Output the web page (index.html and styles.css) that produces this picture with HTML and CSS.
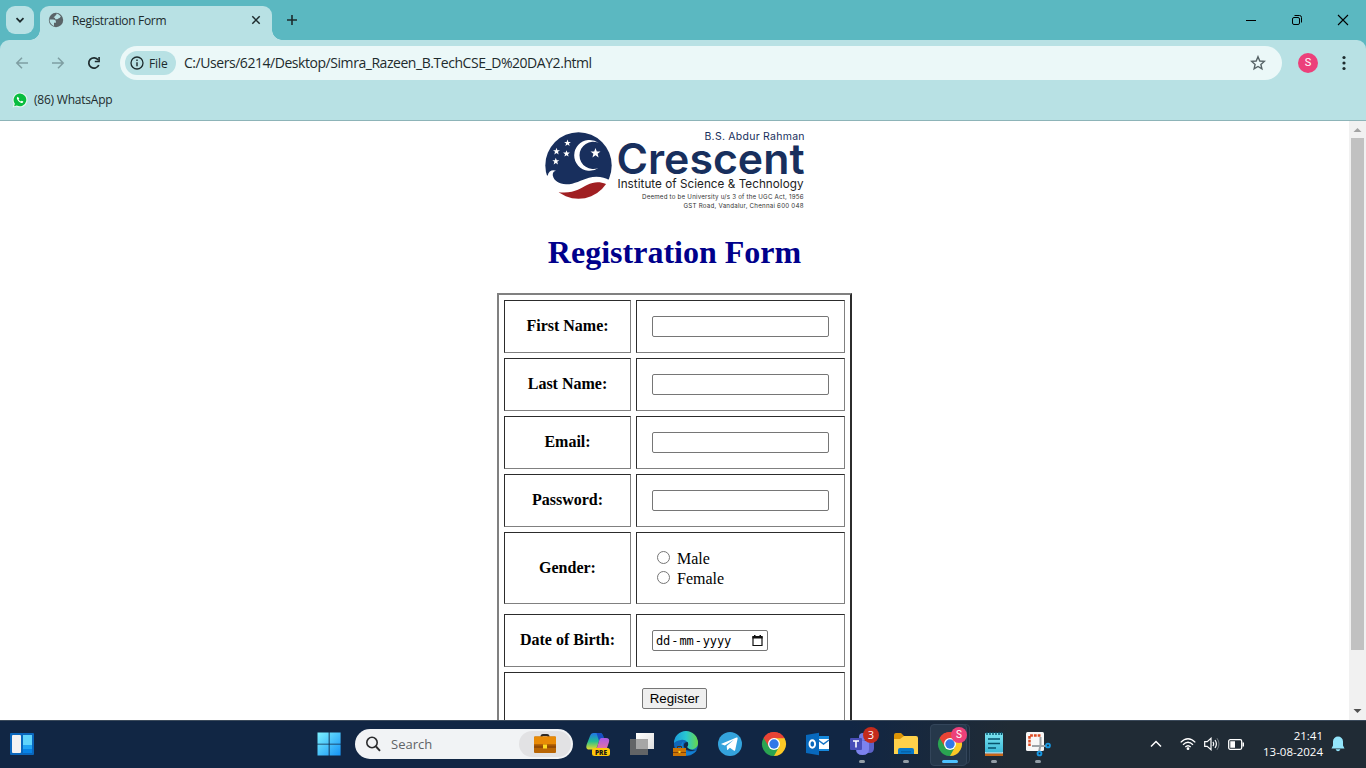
FILE: index.html
```html
<!DOCTYPE html>
<html lang="en">
<head>
<meta charset="utf-8">
<title>Registration Form</title>
<link rel="stylesheet" href="styles.css">
</head>
<body>
<div class="screen">
  <header class="tabstrip">
    <div class="tab-search"><svg width="10" height="10" viewBox="0 0 10 10"><path d="M1.500 3.200 5 6.700 8.500 3.200" fill="none" stroke="#1d2b2d" stroke-width="1.700"/></svg></div>
    <div class="tab">
      <svg class="globe" width="16" height="16" viewBox="0 0 16 16"><circle cx="8" cy="8" r="7.200" fill="#5a6468"/><path d="M8.600 1.500c1.700.4 3.500 1.700 4.300 3.300-.8 0-.8 1.500-2 1.500-.8 0-.8.9-1.700.9H7.100V5.800H5.500L7.200 3.800c.6-.6 1.300-.7 1.400-2.300zM1.500 7.600h3.800c1.600 0 2.600.8 2.600 2v1.100H6v3.400C3.400 13.200 1.600 10.800 1.500 7.600z" fill="#b8e1e4"/></svg>
      <span class="tab-title">Registration Form</span>
      <svg class="tab-close" width="10" height="10" viewBox="0 0 10 10"><path d="M1.300 1.300l7.400 7.400M8.700 1.300 1.300 8.700" stroke="#1d2b2d" stroke-width="1.500"/></svg>
    </div>
    <svg class="new-tab" width="12" height="12" viewBox="0 0 12 12"><path d="M6 1v10M1 6h10" stroke="#1d2b2d" stroke-width="1.600"/></svg>
    <div class="window-buttons">
      <svg width="12" height="12" viewBox="0 0 12 12"><path d="M1 6.500h10" stroke="#000"/></svg>
      <svg width="12" height="12" viewBox="0 0 12 12"><rect x="1.500" y="3.500" width="7" height="7" rx="1.500" fill="none" stroke="#000"/><path d="M3.500 1.500H8.500a2 2 0 0 1 2 2V8.500" fill="none" stroke="#000"/></svg>
      <svg width="12" height="12" viewBox="0 0 12 12"><path d="M1 1l10 10M11 1 1 11" stroke="#000" stroke-width="1.100"/></svg>
    </div>
  </header>

  <div class="chrome">
    <div class="toolbar">
      <svg class="nav" width="14" height="14" viewBox="0 0 14 14"><path d="M13 7H2M7 1.800 1.800 7 7 12.200" fill="none" stroke="#7e9ea2" stroke-width="1.500"/></svg>
      <svg class="nav" width="14" height="14" viewBox="0 0 14 14"><path d="M1 7h11M7 1.800 12.200 7 7 12.200" fill="none" stroke="#7e9ea2" stroke-width="1.500"/></svg>
      <svg class="nav" width="14" height="14" viewBox="0 0 14 14"><path d="M11.800 9A5.200 5.200 0 1 1 11.200 3.900" fill="none" stroke="#1d2b2d" stroke-width="1.700"/><path d="M12.900 1v5.300H7.800V4.700h3.500V1z" fill="#1d2b2d"/></svg>
      <div class="address">
        <div class="file-chip"><svg width="14" height="14" viewBox="0 0 14 14"><circle cx="7" cy="7" r="6" fill="none" stroke="#1d2b2d" stroke-width="1.300"/><path d="M7 6.200v4M7 3.500v1.400" stroke="#1d2b2d" stroke-width="1.400"/></svg><span>File</span></div>
        <span class="url">C:/Users/6214/Desktop/Simra_Razeen_B.TechCSE_D%20DAY2.html</span>
        <svg class="star" width="16" height="16" viewBox="0 0 16 16"><path d="M8 1.700 9.800 6l4.500.4-3.400 3 1 4.500L8 11.500l-3.900 2.400 1-4.500-3.400-3L6.200 6z" fill="none" stroke="#566366" stroke-width="1.400"/></svg>
      </div>
      <span class="avatar">S</span>
      <svg class="kebab" width="4" height="16" viewBox="0 0 4 16"><g fill="#1d2b2d"><circle cx="2" cy="2.500" r="1.600"/><circle cx="2" cy="8" r="1.600"/><circle cx="2" cy="13.500" r="1.600"/></g></svg>
    </div>
    <div class="bookmarks">
      <svg width="16" height="16" viewBox="0 0 16 16"><path d="M8 .5a7.400 7.400 0 1 1-3.500 13.900L.6 15.500 1.700 11.700A7.400 7.400 0 0 1 8 .5z" fill="#e8f7f2"/><path d="M8 1.500a6.400 6.400 0 1 1-3.200 12l-2.700.7.8-2.500A6.400 6.400 0 0 1 8 1.500z" fill="#08bd3f"/><path d="M5.800 4.700c-1 .4-1.200 1.600-.5 2.900 1 1.900 2.600 3.100 4.100 3.400 1.100.2 1.900-.5 1.900-1.500L9.700 8.700 8.900 9.600C7.900 9.200 7.100 8.500 6.600 7.500l.7-.9z" fill="#fff"/></svg>
      <span>(86) WhatsApp</span>
    </div>
  </div>

  <div class="viewport">
    <main class="page">
      <svg class="logo" width="270" height="84" viewBox="0 0 270 84">
        <defs>
          <clipPath id="emblem"><circle cx="38.500" cy="39.500" r="33.200"/></clipPath>
          <path id="logo-star" d="M0-5 1.300-1.600 5-1.500 2.100.8 3.100 4.400 0 2.300-3.100 4.400-2.100.8-5-1.500-1.300-1.600z"/>
        </defs>
        <g clip-path="url(#emblem)">
          <path d="M0 0h80v55L69 54C65 51 56 49.500 49 51.700 41 54 34 58.500 26 58.300 19 58 14 55 12.800 49.500 12.500 47 13.500 45 16 44.800 12.500 43.300 8.500 45 7.700 49.500L0 51z" fill="#182f5d"/>
          <path d="M17.500 66C33 68.500 41 62 47 59 54 55.500 60 55.500 66 58L72 76H14z" fill="#a01f22"/>
        </g>
        <path d="M58.800 17A15.400 15.400 0 1 0 58.800 41.700 13.600 13.600 0 1 1 58.800 17z" fill="#fff"/>
        <g fill="#fff"><use href="#logo-star" transform="translate(55.500 27)"/><use href="#logo-star" transform="translate(27.500 17) scale(.68)"/><use href="#logo-star" transform="translate(16.500 25.300) scale(.7)"/><use href="#logo-star" transform="translate(26.500 27.600) scale(.68)"/><use href="#logo-star" transform="translate(15.800 35.300) scale(.7)"/></g>
        <g font-family="Inter, sans-serif">
          <text x="164.500" y="14" font-size="10.500" fill="#182f5d" textLength="100">B.S. Abdur Rahman</text>
          <text x="76.500" y="48" font-size="42" font-weight="600" fill="#182f5d" textLength="188" lengthAdjust="spacingAndGlyphs">Crescent</text>
          <text x="77.500" y="62" font-size="11.700" fill="#222" textLength="186">Institute of Science &amp; Technology</text>
          <text x="102" y="73" font-size="6.200" fill="#333" textLength="161.500">Deemed to be University u/s 3 of the UGC Act, 1956</text>
          <text x="143.500" y="81.500" font-size="6.200" fill="#333" textLength="120">GST Road, Vandalur, Chennai 600 048</text>
        </g>
      </svg>
      <h1>Registration Form</h1>
      <table class="form">
        <tr><th>First Name:</th><td><input class="field" type="text"></td></tr>
        <tr><th>Last Name:</th><td><input class="field" type="text"></td></tr>
        <tr><th>Email:</th><td><input class="field" type="text"></td></tr>
        <tr><th>Password:</th><td><input class="field" type="password"></td></tr>
        <tr class="gender"><th>Gender:</th><td><label class="choice"><i class="radio"></i>Male</label><label class="choice"><i class="radio"></i>Female</label></td></tr>
        <tr class="spacer"></tr>
        <tr><th>Date of Birth:</th><td><div class="date"><span>dd</span><span>-</span><span>mm</span><span>-</span><span>yyyy</span><svg width="11" height="12" viewBox="0 0 11 12"><path d="M1 2h9v8.500H1z" fill="none" stroke="#111" stroke-width="1.200"/><path d="M.4 1h10.200v2.500H.4zM2 0h1.500v2H2zM7.500 0H9v2H7.500z" fill="#111"/></svg></div></td></tr>
        <tr><td class="submit" colspan="2"><button class="register">Register</button></td></tr>
      </table>
    </main>
    <div class="scrollbar">
      <svg width="17" height="17" viewBox="0 0 17 17"><path d="M4.500 11 8.500 7l4 4z" fill="#a3a3a3"/></svg>
      <div class="thumb"></div>
      <svg width="17" height="17" viewBox="0 0 17 17"><path d="M4.500 6l4 4 4-4z" fill="#505050"/></svg>
    </div>
  </div>

  <footer class="taskbar">
    <svg class="widgets" width="24" height="22" viewBox="0 0 24 22"><rect width="24" height="22" rx="1" fill="#0a67bd"/><rect x="2" y="2" width="9" height="18" rx="1" fill="#f2f2f2"/><path d="M13 2h9v10h-9z" fill="#60d4fb"/><path d="M13 12h9v4h-9z" fill="#20a4f4"/><path d="M13 16h9v4h-9z" fill="#0783e6"/></svg>
    <div class="task"><svg width="24" height="24" viewBox="0 0 24 24"><defs><linearGradient id="win" x1="0" y1="0" x2="24" y2="24" gradientUnits="userSpaceOnUse"><stop stop-color="#7ff3ff"/><stop offset="1" stop-color="#1291f5"/></linearGradient></defs><path d="M.5.5h11.200v11.200H.5zM12.600.5h11v11.200h-11zM.5 12.600h11.200v11H.5zM12.600 12.600h11v11h-11z" fill="url(#win)"/></svg></div>
    <div class="search">
      <svg width="16" height="16" viewBox="0 0 16 16"><circle cx="7" cy="6.500" r="5.200" fill="none" stroke="#2b2c2e" stroke-width="1.600"/><path d="m11 10.500 4 4.300" stroke="#2b2c2e" stroke-width="1.900"/></svg>
      <span>Search</span>
      <div class="highlight"><svg width="24" height="20" viewBox="0 0 24 20"><path d="M8.500 3V2.500Q8.500 1 10 1h4q1.500 0 1.500 1.500V3" fill="none" stroke="#2d2926" stroke-width="2"/><rect x="1" y="2.500" width="22" height="16.500" rx="1" fill="#b86504"/><path d="M1 3.500q0-1 1-1h20q1 0 1 1V10H1z" fill="#e88a06"/><path d="M1 11.500h22V14H1z" fill="#944b04"/><path d="M10 10.500h4v4h-4z" fill="#ffdc20"/></svg></div>
    </div>
    <div class="apps">
      <div class="task"><svg width="26" height="26" viewBox="0 0 26 26"><defs><linearGradient id="cpa" x1="0" y1="0" x2="0" y2="1"><stop stop-color="#2277e6"/><stop offset=".5" stop-color="#20bd94"/><stop offset="1" stop-color="#e9dc25"/></linearGradient><linearGradient id="cpb" x1="0" y1="0" x2="0" y2="1"><stop stop-color="#a85be8"/><stop offset="1" stop-color="#f17893"/></linearGradient></defs><path d="M8.500 2H15c2 0 3 2 3.500 5-3 0-4 1-4.800 4l-1.500 5q-.8 2.500-3.700 2.500H4C1 18.500 1 16 1.700 13.500L5 5q1-3 3.500-3z" fill="url(#cpa)"/><path d="M11.500 2H15q3 0 4 5.500-4 0-5 2.500z" fill="#174fc2"/><path d="M16.500 7H21q4 0 3 4l-2 6q-.7 3-3.500 3H11l3-10q.7-3 2.500-3z" fill="url(#cpb)"/><rect x="7" y="17" width="18" height="8" rx="2.500" fill="#ffc80a"/><text class="pre-label" x="16" y="23.600" text-anchor="middle">PRE</text></svg></div>
      <div class="task"><svg width="26" height="26" viewBox="0 0 26 26"><defs><linearGradient id="tv" x1="0" y1="0" x2="1" y2="1"><stop stop-color="#fff"/><stop offset="1" stop-color="#dedede"/></linearGradient></defs><path d="M1 8h18v16H1z" fill="#626466"/><path d="M7 2h18v16H7z" fill="url(#tv)"/><path d="M7 8h12v10H7z" fill="#a6a6a6"/></svg></div>
      <div class="task"><svg width="26" height="26" viewBox="0 0 26 26"><defs><linearGradient id="ed" x1="0" y1="0" x2="1" y2="0"><stop stop-color="#1b9bdc"/><stop offset=".5" stop-color="#28c8d2"/><stop offset="1" stop-color="#68d64a"/></linearGradient></defs><circle cx="13" cy="13" r="12" fill="#1067b9"/><path d="M1 12A12 12 0 0 1 25 12c0 4-3 6.500-7 6.500-3 0-5-1-4-2.500 3-5-2-8-6-7-4 .5-6 2-7 3z" fill="url(#ed)"/><path d="M11 10q-3 5 1 9t12 0q-4 6-12 5-7-4-4-10 1-3 3-4z" fill="#1480d1"/><path d="M14 16q2-2 .7-5-4 0-4 4 2 7 13 4-6 1-9.700-3z" fill="#122745"/><path d="M4.500 17v-1.500h4V17" fill="none" stroke="#583008"/><path d="M0 17h13v8H0z" fill="#cc7505"/><path d="M0 21h13v1H0z" fill="#854304"/><path d="M5.500 20h2v2h-2z" fill="#ffdc20"/></svg></div>
      <div class="task"><svg width="26" height="26" viewBox="0 0 26 26"><circle cx="13" cy="13" r="12" fill="#34a3dc"/><path d="m4.500 12.700 15-6.100c.8-.3 1.300.1 1.100 1.100L18.200 19c-.2.900-.8 1-1.500.6l-3.800-2.800-2 1.900c-.5.500-.8.300-.9-.5l-.3-3.100 7.200-6.400-9 5.700-3.400-1.100q-.8-.3 0-.6z" fill="#fff"/></svg></div>
      <div class="task"><svg width="26" height="26" viewBox="0 0 26 26"><g id="chrome-logo"><path d="M13 13 2.600 7A12 12 0 0 1 23.400 7z" fill="#e84435"/><path d="M13 13 23.400 7A12 12 0 0 1 13 25z" fill="#fcc925"/><path d="M13 13V25A12 12 0 0 1 2.600 7z" fill="#2aa451"/><path d="M13 7.200h10.500L18 15.900z" fill="#fcc925"/><path d="M13 7h10.400A12 12 0 0 0 2.600 7L8 16z" fill="#e84435"/><path d="M8 15.900 2.600 7 13 25l5-9.100z" fill="#2aa451"/><circle cx="13" cy="13" r="6" fill="#fff"/><circle cx="13" cy="13" r="4.700" fill="#3278e8"/></g></svg></div>
      <div class="task"><svg width="26" height="26" viewBox="0 0 26 26"><path d="M12 5h12v15H12z" fill="#1689dc"/><path d="M12 8h12v10H12z" fill="#fff"/><path d="m13 9 5.500 4L24 9" fill="none" stroke="#1675c6" stroke-width="1.500"/><path d="M1 4 14 1.800v22.400L1 22z" fill="#0869bd"/><ellipse cx="7.300" cy="13" rx="2.800" ry="3.700" fill="none" stroke="#fff" stroke-width="1.900"/></svg></div>
      <div class="task running"><svg width="26" height="26" viewBox="0 0 26 26"><circle cx="14" cy="6" r="4" fill="#737be6"/><path d="M17 10h8v7q0 5-5 5h-3z" fill="#5c62c9"/><path d="M7 10h13v8q0 6-6.500 6T7 18z" fill="#7c82ee"/><rect x="1" y="7" width="12" height="12" rx="1" fill="#484eb8"/><path d="M4 10h6M7 10v6.500" stroke="#fff" stroke-width="1.600"/></svg><span class="badge">3</span></div>
      <div class="task running"><svg width="26" height="26" viewBox="0 0 26 26"><path d="M1 4q0-2 2-2h5l3 3v5H1z" fill="#dc9405"/><path d="M1 8h6l4-3h12q2 0 2 2v16H1z" fill="#ffd14a"/><path d="M5 23v-4q0-2 2-2h12q2 0 2 2v4z" fill="#0879ca"/><path d="M8 20h10v1.500H8z" fill="#0763a9"/></svg></div>
      <div class="task running active"><i class="stack"></i><svg width="26" height="26" viewBox="0 0 26 26"><use href="#chrome-logo"/></svg><span class="badge profile">S</span></div>
      <div class="task running"><svg width="26" height="26" viewBox="0 0 26 26"><defs><linearGradient id="note" x1="0" y1="0" x2="0" y2="1"><stop stop-color="#7ce4f1"/><stop offset="1" stop-color="#3bb9d8"/></linearGradient></defs><path d="M4 22.500h18V25H4z" fill="#c76619"/><path d="M4 20.500h18v2H4z" fill="#e9eef0"/><rect x="4" y="2" width="18" height="19.500" rx="1" fill="url(#note)"/><path d="M6 1v3M9 1v3M12 1v3M15 1v3M18 1v3M20.500 1v3M7 8h12M7 12.500h12M7 17h8" stroke="#07536d" stroke-width="1.400"/></svg></div>
      <div class="task running"><svg width="28" height="26" viewBox="0 0 28 26"><rect x="2" y="1" width="18" height="19" rx="1.500" fill="#f7f7f7"/><path d="M16.500 4.500H5.500v10.500" fill="none" stroke="#dc4a22" stroke-width="2.500" stroke-dasharray="2.800 1"/><path d="M16.500 6v8l-1.500 7M8 15h8.500H22" fill="none" stroke="#9da3a7" stroke-width="2"/><circle cx="24" cy="14.500" r="1.900" fill="none" stroke="#1798e3" stroke-width="1.900"/><circle cx="15.500" cy="22.500" r="1.900" fill="none" stroke="#1798e3" stroke-width="1.900"/></svg></div>
    </div>
    <div class="tray">
      <svg class="chevron" width="12" height="8" viewBox="0 0 12 8"><path d="m1 6.500 5-5 5 5" fill="none" stroke="#fff" stroke-width="1.500"/></svg>
      <svg class="wifi" width="16" height="14" viewBox="0 0 16 14"><g fill="none" stroke="#fff" stroke-width="1.300"><path d="M.7 5.400Q8-1.800 15.300 5.400"/><path d="M3 7.700q5-4.800 10 0"/><path d="M5.300 10q2.700-2.600 5.400 0"/></g><circle cx="8" cy="11.700" r="1.400" fill="#fff"/></svg>
      <svg class="speaker" width="16" height="14" viewBox="0 0 16 14"><path d="M.7 4.700h2.500L7 1.300v11.400L3.200 9.300H.7z" fill="none" stroke="#fff" stroke-width="1.200"/><path d="M9 4.800q1.500 2.200 0 4.400M11 3q2.800 4 0 8" fill="none" stroke="#fff" stroke-width="1.200"/><path d="M13 1.200q4 5.800 0 11.600" fill="none" stroke="#727a80"/></svg>
      <svg class="battery" width="17" height="11" viewBox="0 0 17 11"><rect x=".7" y=".7" width="13" height="9.600" rx="1.500" fill="none" stroke="#fff" stroke-width="1.300"/><path d="M2.300 2.300H7v6.400H2.300zM14.500 3.500H16v4h-1.500z" fill="#fff"/></svg>
      <div class="clock"><span>21:41</span><span class="day">13-08-2024</span></div>
      <svg class="bell" width="14" height="16" viewBox="0 0 14 16"><path d="M7 .5a5 5 0 0 1 5 5v4l1.500 3H.5l1.500-3v-4a5 5 0 0 1 5-5zM4.600 13.300h4.800q-.8 2-2.400 2t-2.400-2z" fill="#93e5fb"/></svg>
    </div>
  </footer>
</div>
</body>
</html>
```

FILE: styles.css
```css
* { box-sizing: border-box; }
body { margin: 0; overflow: hidden; font-family: "Open Sans", "Noto Sans", sans-serif; color: #1d2b2d; }
svg { display: block; flex: none; }
.screen { width: 1366px; height: 768px; display: flex; flex-direction: column; overflow: hidden; }

.tabstrip { height: 40px; flex: none; display: flex; align-items: center; background: #5bb8c1; padding: 0 17px 0 6px; }
.tab-search { width: 28px; height: 28px; border-radius: 9px; background: #b8e1e4; display: grid; place-items: center; }
.tab { position: relative; width: 232px; height: 34px; margin: 6px 0 0 6px; padding: 0 11px 6px 8px; border-radius: 9px 9px 0 0; background: #b8e1e4; display: flex; align-items: center; }
.tab::before, .tab::after { content: ""; position: absolute; bottom: 0; width: 10px; height: 10px; }
.tab::before { left: -10px; background: radial-gradient(circle at 0 0, transparent 9.5px, #b8e1e4 10px); }
.tab::after { right: -10px; background: radial-gradient(circle at 100% 0, transparent 9.5px, #b8e1e4 10px); }
.tab-title { margin-left: 8px; font-size: 12px; letter-spacing: -.32px; white-space: nowrap; }
.tab-close { margin-left: auto; }
.new-tab { margin-left: 14px; }
.window-buttons { margin-left: auto; display: flex; gap: 34px; }

.chrome { height: 81px; flex: none; background: linear-gradient(#5bb8c1 0 10px, #b8e1e4 10px); border-bottom: 1px solid #8db4b8; }
.toolbar { height: 46px; padding-left: 15px; border-radius: 9px 9px 0 0; background: #b8e1e4; display: flex; align-items: center; }
.nav { margin-right: 22px; }
.address { width: 1162px; height: 34px; margin-left: -3px; padding: 0 16px 0 5px; border-radius: 17px; background: #ebf8f8; display: flex; align-items: center; }
.file-chip { width: 51px; height: 24px; padding-left: 5px; border-radius: 12px; background: #b8e1e4; display: flex; align-items: center; gap: 5px; font-size: 12px; font-weight: 500; letter-spacing: -.1px; }
.url { margin-left: 8px; padding-bottom: 2px; font-size: 14px; letter-spacing: -.45px; white-space: nowrap; }
.star { margin-left: auto; }
.avatar { width: 20px; height: 20px; margin-left: 16px; border-radius: 50%; background: #ec407a; color: #fff; font: 11px/20px Roboto, sans-serif; text-align: center; }
.kebab { margin-left: 24px; }
.bookmarks { height: 28px; padding-left: 12px; display: flex; align-items: center; gap: 6px; font-size: 12px; letter-spacing: -.22px; }
.bookmarks span { padding-bottom: 1px; }

.viewport { height: 599px; flex: none; display: flex; background: #fff; }
.page { width: 1349px; height: 599px; padding-top: 5px; overflow: hidden; display: flex; flex-direction: column; align-items: center; font-family: "Liberation Serif", serif; font-size: 16px; color: #000; }
h1 { margin: 23px 0 22px; font-size: 32px; line-height: 38px; color: #00008b; }
.form { width: 355px; flex: none; border: 2px solid; border-color: #808080 #2c2c2c #2c2c2c #808080; border-spacing: 5px; table-layout: fixed; }
.form tr { height: 53px; }
.form .gender { height: 72px; }
.form .spacer { height: 0; }
.form th, .form td { padding: 0; border: 1px solid; border-color: #2c2c2c #808080 #808080 #2c2c2c; }
.form th { width: 127px; padding-bottom: 2px; }
.form .gender th { padding-bottom: 0; }
.form td { padding-left: 15px; }
.form .gender td { padding-top: 2px; }
.form .submit { padding: 0; text-align: center; }
.field { display: block; width: 177px; height: 21px; border: 1px solid #767676; border-radius: 2px; }
.choice { display: flex; align-items: center; height: 20px; padding-left: 5px; }
.radio { width: 13px; height: 13px; margin: -3px 7px 0 0; border: 1px solid #767676; border-radius: 50%; }
.date { width: 116px; height: 21px; padding: 0 4px 0 3px; border: 1px solid #767676; border-radius: 2px; display: flex; align-items: center; font: 12px "DejaVu Sans Mono", monospace; letter-spacing: -.1px; }
.date span { margin-right: 1px; }
.date svg { margin-left: auto; }
.register { width: 65px; height: 21px; padding: 0; border: 1px solid #767676; border-radius: 2px; background: #efefef; color: #000; font: 13.33px "Liberation Sans", sans-serif; vertical-align: middle; }
.scrollbar { width: 17px; background: #f1f1f1; display: flex; flex-direction: column; }
.thumb { width: 13px; height: 512px; margin: 0 2px 53px; background: #c1c1c1; }

.taskbar { height: 48px; flex: none; display: flex; align-items: center; box-shadow: inset 0 1px #3b4a5b; background: linear-gradient(90deg, #112644 0 850px, #202b35 1010px); }
.widgets { margin: 0 273px 0 10px; }
.task { position: relative; width: 44px; height: 48px; display: grid; place-items: center; }
.search { width: 218px; height: 30px; margin: 0 3px 0 4px; padding: 0 2px 0 10px; border-radius: 15px; background: #f1f3f5; display: flex; align-items: center; gap: 10px; font-size: 13px; color: #606467; }
.highlight { width: 52px; height: 26px; margin-left: auto; border-radius: 13px; background: #e2e2e4; display: grid; place-items: center; }
.apps { display: flex; }
.pre-label { font: 800 6.500px "Open Sans", sans-serif; fill: #161616; }
.running::after { content: ""; position: absolute; left: 19px; bottom: 5px; width: 6px; height: 3px; border-radius: 2px; background: #929da6; }
.active::before { content: ""; position: absolute; left: 2px; top: 4px; width: 35px; height: 40px; border-radius: 4px; background: #26384b; border: 1px solid #33455a; }
.stack { position: absolute; left: 10px; top: 4px; width: 32px; height: 40px; border-radius: 4px; background: #1d2e40; border: 1px solid #304155; }
.active::before { z-index: 1; }
.active svg, .active .badge { z-index: 2; }
.active svg { position: relative; }
.active::after { left: 14px; width: 16px; background: #4cc2ff; z-index: 2; }
.badge { position: absolute; left: 23px; top: 7px; width: 16px; height: 16px; border-radius: 50%; background: #c42b1c; color: #fff; font-size: 11px; line-height: 16px; text-align: center; }
.profile { background: #ec407a; font: 10px/16px Roboto, sans-serif; }
.tray { margin-left: auto; padding-right: 21px; display: flex; align-items: center; color: #fff; }
.chevron { margin-right: 18px; }
.wifi { margin-right: 8px; }
.speaker { margin-right: 8px; }
.battery { margin-right: 15px; }
.clock { width: 63px; display: flex; flex-direction: column; align-items: flex-end; font-size: 11.500px; line-height: 16px; letter-spacing: 0; white-space: nowrap; }
.clock span { margin-bottom: 0; }
.bell { margin-left: 8px; }
```
